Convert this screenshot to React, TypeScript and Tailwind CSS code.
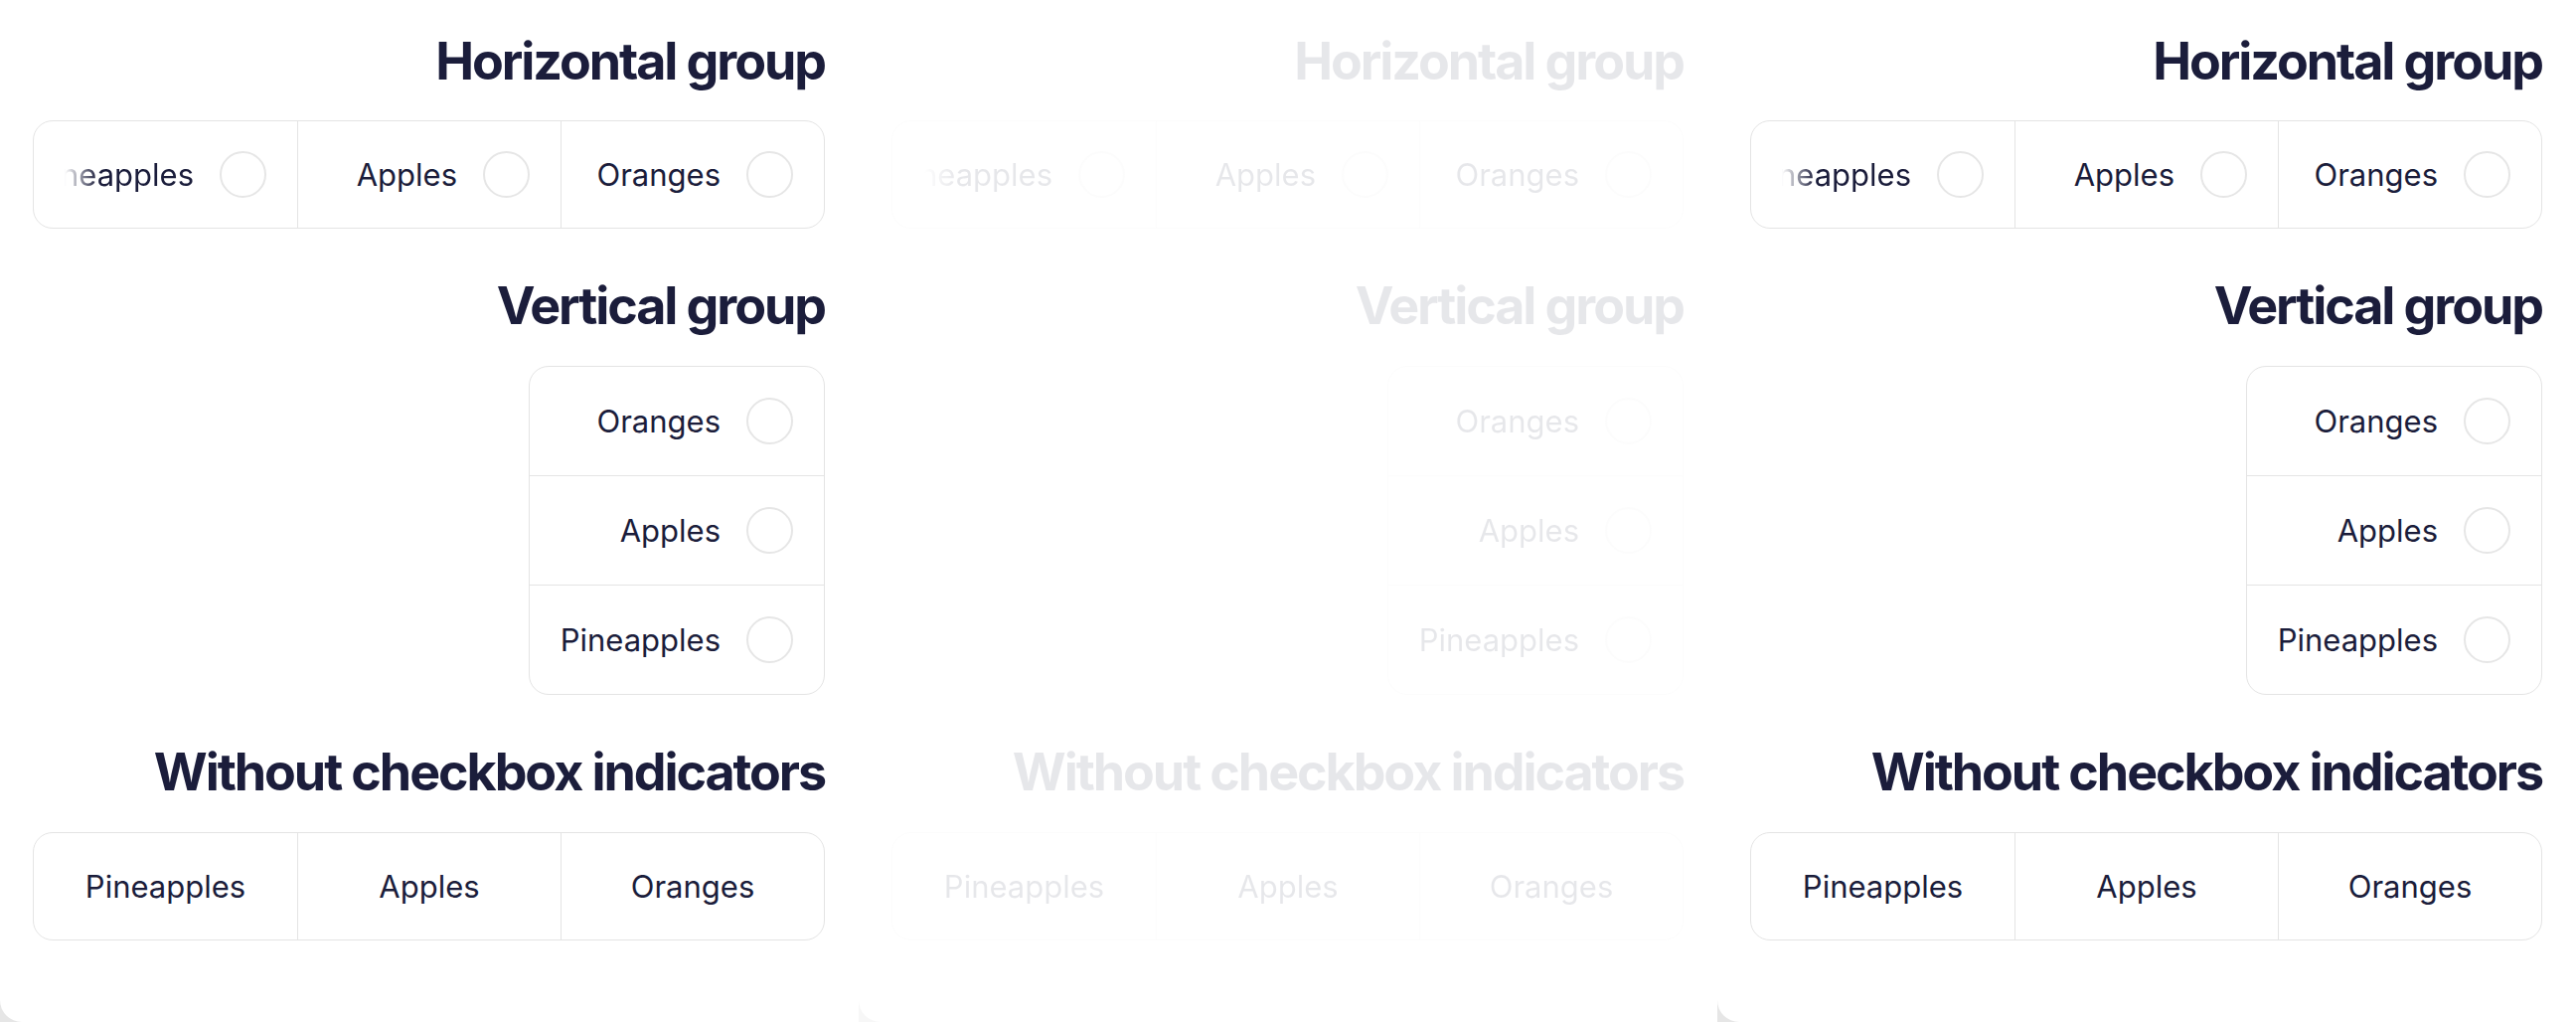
import React from "react";

const TEXT = "text-[#1b1d3b]";

function Circle() {
  return <span className="block w-[47px] h-[47px] shrink-0 rounded-full border-2 border-[#e6e6e6] bg-white" />;
}

function Heading({ children }: { children: React.ReactNode }) {
  return (
    <h2 className={`text-[52px] leading-[52px] font-bold tracking-[-0.04em] ${TEXT} text-right whitespace-nowrap`}>{children}</h2>
  );
}

function CheckCell({ label, border, fade, tall }: { label: string; border?: string; fade?: boolean; tall?: boolean }) {
  return (
    <div className={`flex items-center justify-end gap-[26px] px-[31px] ${tall ? "h-[109px]" : "h-[107px]"} min-w-0 ${border ?? ""}`}>
      <div
        className={`flex justify-end min-w-0 overflow-hidden ${
          fade ? "[mask-image:linear-gradient(to_right,transparent_0px,black_34px)]" : ""
        }`}
      >
        <span className={`whitespace-nowrap text-[31px] leading-[40px] ${TEXT}`}>{label}</span>
      </div>
      <Circle />
    </div>
  );
}

function PlainCell({ label, border }: { label: string; border?: string }) {
  return (
    <div className={`flex items-center justify-center h-[107px] ${border ?? ""}`}>
      <span className={`whitespace-nowrap text-[31px] leading-[40px] ${TEXT}`}>{label}</span>
    </div>
  );
}

function Panel({ faded, cornerBg }: { faded?: boolean; cornerBg: string }) {
  return (
    <div className={`w-[864px] h-[1028px] shrink-0 ${cornerBg}`}>
      <div className="w-full h-full bg-white rounded-bl-[22px] overflow-hidden">
        <div className={`flex flex-col items-end pl-[33px] pr-[34px] pt-[36px] ${faded ? "opacity-[0.1]" : ""}`}>
          <Heading>Horizontal group</Heading>
          <div className="mt-[33px] w-full grid grid-cols-3 border border-[#e4e4e4] rounded-[20px]">
            <CheckCell label="Pineapples" fade />
            <CheckCell label="Apples" border="border-l border-[#e4e4e4]" />
            <CheckCell label="Oranges" border="border-l border-[#e4e4e4]" />
          </div>

          <div className="mt-[52px]">
            <Heading>Vertical group</Heading>
          </div>
          <div className="mt-[34px] flex flex-col border border-[#e4e4e4] rounded-[20px]">
            <CheckCell label="Oranges" tall />
            <div className="border-t border-[#e4e4e4]">
              <CheckCell label="Apples" tall />
            </div>
            <div className="border-t border-[#e4e4e4]">
              <CheckCell label="Pineapples" tall />
            </div>
          </div>

          <div className="mt-[52px]">
            <Heading>Without checkbox indicators</Heading>
          </div>
          <div className="mt-[34px] w-full grid grid-cols-3 border border-[#e4e4e4] rounded-[20px]">
            <PlainCell label="Pineapples" />
            <PlainCell label="Apples" border="border-l border-[#e4e4e4]" />
            <PlainCell label="Oranges" border="border-l border-[#e4e4e4]" />
          </div>
        </div>
      </div>
    </div>
  );
}

export default function App() {
  return (
    <div className="w-[2592px] h-[1028px] flex bg-white overflow-hidden" style={{ fontFamily: "Inter, 'Noto Sans', sans-serif" }}>
      <Panel cornerBg="bg-[#e6e6e6]" />
      <Panel faded cornerBg="bg-[#f7f7f7]" />
      <Panel cornerBg="bg-[#e6e6e6]" />
    </div>
  );
}
